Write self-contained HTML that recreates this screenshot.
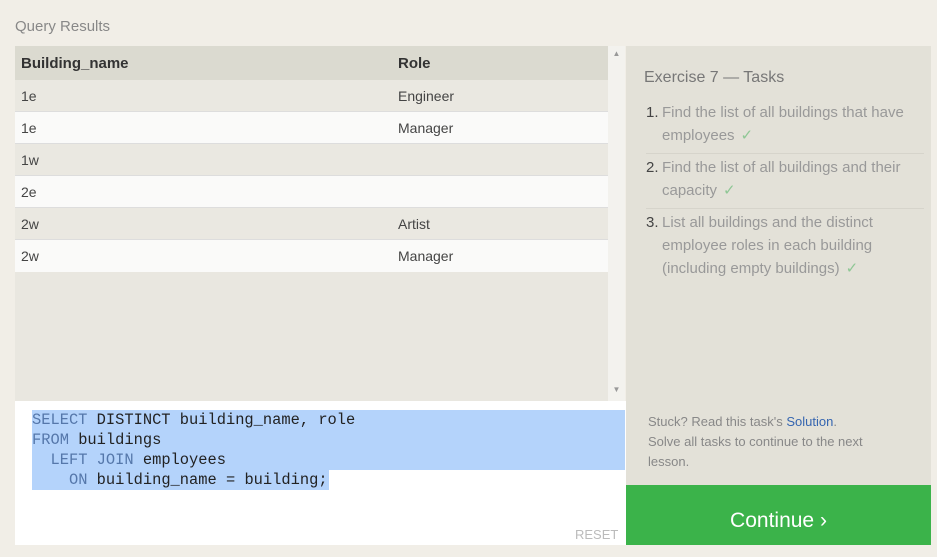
<!DOCTYPE html>
<html><head><style>
*{margin:0;padding:0;box-sizing:border-box}
body{width:937px;height:545px;background:#f1eee7;font-family:"Liberation Sans",sans-serif;position:relative;overflow:hidden}
.t{position:absolute;left:15px;top:18px;font-size:15px;color:#888}
.tbl{position:absolute;left:15px;top:46px;width:593px;height:355px;background:#e9e7e0}
.row{height:32px;line-height:33px;font-size:14px;color:#444;position:relative;border-bottom:1px solid #ddd}
.row span{position:absolute}
.row .a{left:6px}.row .b{left:383px}
.hd{height:34px;line-height:35px;background:#dbdad0;font-weight:bold;font-size:15px;color:#333;border:0}
.o{background:#eae8e1}.e{background:#fafaf9}
.sb{position:absolute;left:608px;top:46px;width:17px;height:355px;background:#f3f2ee;color:#999;font-size:8px;text-align:center}
.ed{position:absolute;left:15px;top:401px;width:611px;height:144px;background:#fff}
.code{position:absolute;left:32px;top:410px;font-family:"Liberation Mono",monospace;font-size:15.4px;line-height:20px;color:#222}
.code div{height:20px;background:#b4d3fb;white-space:pre}
.k{color:#5577aa}
.rs{position:absolute;left:575px;top:527px;font-size:13px;color:#bbb}
.rp{position:absolute;left:626px;top:46px;width:305px;height:439px;background:#e3e1d8}
.rp h3{position:absolute;left:18px;top:23px;font-weight:normal;font-size:16px;color:#777}
ol{position:absolute;left:20px;top:55px;width:278px;list-style:none}
li{font-size:15px;color:#999;line-height:23px;padding:0 0 6px 16px;position:relative;border-bottom:1px solid #d6d4cb;margin-bottom:2px}
li:last-child{border:0}
li b{position:absolute;left:0;font-weight:normal;color:#444}
.ck{color:#8fc795;margin-left:6px}
.st{position:absolute;left:22px;top:366px;font-size:13px;color:#888;line-height:20px}
.st a{color:#3565b0}
.go{position:absolute;left:626px;top:485px;width:305px;height:60px;background:#3bb34a;color:#fff;font-size:21px;text-align:center;line-height:72px}
</style></head><body>
<div class="t">Query Results</div>
<div class="tbl">
<div class="row hd"><span class="a">Building_name</span><span class="b">Role</span></div>
<div class="row o"><span class="a">1e</span><span class="b">Engineer</span></div>
<div class="row e"><span class="a">1e</span><span class="b">Manager</span></div>
<div class="row o"><span class="a">1w</span></div>
<div class="row e"><span class="a">2e</span></div>
<div class="row o"><span class="a">2w</span><span class="b">Artist</span></div>
<div class="row e" style="border:0"><span class="a">2w</span><span class="b">Manager</span></div>
</div>
<div class="sb"><div style="margin-top:3px">▲</div><div style="margin-top:327px">▼</div></div>
<div class="ed"></div>
<div class="code">
<div style="width:593px"><span class="k">SELECT</span> DISTINCT building_name, role</div>
<div style="width:593px"><span class="k">FROM</span> buildings</div>
<div style="width:593px">  <span class="k">LEFT JOIN</span> employees</div>
<div style="width:297px">    <span class="k">ON</span> building_name = building;</div>
</div>
<div class="rs">RESET</div>
<div class="rp">
<h3>Exercise 7 — Tasks</h3>
<ol>
<li><b>1.</b>Find the list of all buildings that have employees<span class="ck">✓</span></li>
<li><b>2.</b>Find the list of all buildings and their capacity<span class="ck">✓</span></li>
<li><b>3.</b>List all buildings and the distinct employee roles in each building (including empty buildings)<span class="ck">✓</span></li>
</ol>
<div class="st">Stuck? Read this task's <a>Solution</a>.<br>Solve all tasks to continue to the next<br>lesson.</div>
</div>
<div class="go">Continue ›</div>
</body></html>
